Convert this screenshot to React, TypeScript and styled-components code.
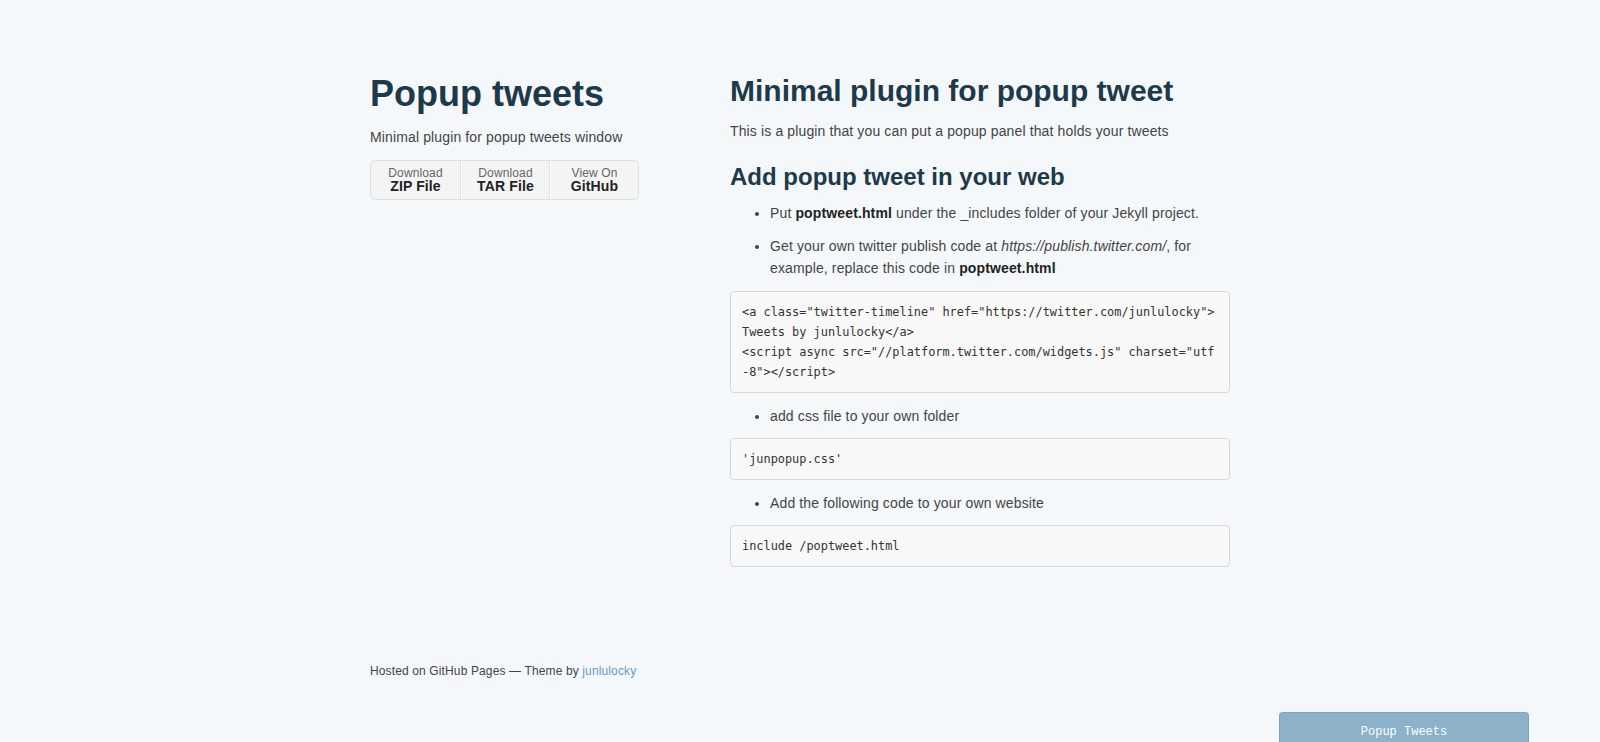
import React from "react";
import styled, { createGlobalStyle } from "styled-components";

const GlobalStyle = createGlobalStyle`
  html, body {
    margin: 0;
    padding: 0;
    background: #f5f8fa;
  }
  body {
    font-family: "Liberation Sans", Arial, Helvetica, sans-serif;
    font-size: 14px;
    line-height: 1.6;
    color: #444;
    letter-spacing: 0.13px;
  }
  * { box-sizing: border-box; }
`;

const Page = styled.div`
  display: flex;
  justify-content: center;
  padding-top: 70px;
`;

const Wrapper = styled.div`
  width: 860px;
  display: flex;
  justify-content: space-between;
  align-items: flex-start;
`;

const Header = styled.header`
  width: 270px;
  height: calc(100vh - 70px - 62px);
  display: flex;
  flex-direction: column;
`;

const Title = styled.h1`
  margin: 4px 0 0;
  font-size: 36px;
  line-height: 40px;
  font-weight: 700;
  letter-spacing: 0;
  color: #1d3a4b;
`;

const Tagline = styled.p`
  margin: 12px 0 12px;
  line-height: 22.4px;
  color: #444;
`;

const Downloads = styled.ul`
  list-style: none;
  margin: 0;
  padding: 0;
  width: 269px;
  height: 40px;
  display: grid;
  grid-template-columns: 90px 89px 1fr;
  background: #f4f4f4;
  border: 1px solid #e0e0e0;
  border-radius: 5px;
`;

const DownloadItem = styled.li`
  height: 38px;
  border-right: 1px solid #e0e0e0;
  & + & {
    border-left: 1px solid #fff;
  }
  &:last-child {
    border-right: none;
  }
`;

const DownloadLink = styled.a`
  display: block;
  text-align: center;
  padding-top: 6px;
  font-size: 12px;
  line-height: 1;
  color: #666;
  text-decoration: none;
`;

const DownloadStrong = styled.strong`
  display: block;
  font-size: 14px;
  line-height: 1;
  color: #222;
  font-weight: 700;
`;

const Footer = styled.p`
  margin: auto 0 0;
  font-size: 12px;
  line-height: 18px;
  color: #444;
`;

const FooterLink = styled.a`
  color: #6a9ac4;
  text-decoration: none;
`;

const Section = styled.main`
  width: 500px;
`;

const PageTitle = styled.h1`
  margin: 3px 0 11px;
  font-size: 30px;
  line-height: 36px;
  font-weight: 700;
  letter-spacing: 0;
  color: #1d3a4b;
`;

const Lead = styled.p`
  margin: 0 0 20px;
  line-height: 22.4px;
`;

const SubTitle = styled.h2`
  margin: 0 0 10px;
  font-size: 24px;
  line-height: 30px;
  font-weight: 700;
  letter-spacing: 0;
  color: #1d3a4b;
`;

const List = styled.ul`
  margin: 0 0 11px;
  padding-left: 40px;
`;

const Item = styled.li`
  line-height: 22.4px;
  & + & {
    margin-top: 10px;
  }
`;

const Bold = styled.strong`
  color: #222;
  font-weight: 700;
`;

const CodeBlock = styled.pre`
  margin: 0 0 12px;
  padding: 10px 11px;
  background: #f8f8f8;
  border: 1px solid #d8d8d8;
  border-radius: 4px;
  font-family: "DejaVu Sans Mono", "Liberation Mono", monospace;
  font-size: 11.9px;
  line-height: 20px;
  letter-spacing: 0;
  color: #333;
  white-space: pre;
  overflow: hidden;
`;

const PopupTab = styled.button`
  position: fixed;
  right: 71px;
  bottom: 0;
  width: 250px;
  height: 30px;
  padding: 8px 0 0;
  border: 1px solid #7fa5be;
  border-bottom: none;
  border-radius: 4px 4px 0 0;
  background: #8cb1c9;
  color: #fff;
  font-family: "Liberation Mono", "Courier New", monospace;
  font-size: 12px;
  line-height: 20px;
  text-align: center;
  cursor: pointer;
`;

const downloads = [
  { top: "Download", bottom: "ZIP File" },
  { top: "Download", bottom: "TAR File" },
  { top: "View On", bottom: "GitHub" },
];

const code1 = `<a class="twitter-timeline" href="https://twitter.com/junlulocky">
Tweets by junlulocky</a>
<script async src="//platform.twitter.com/widgets.js" charset="utf
-8"></script>`;

export default function App() {
  return (
    <>
      <GlobalStyle />
      <Page>
        <Wrapper>
          <Header>
            <Title>Popup tweets</Title>
            <Tagline>Minimal plugin for popup tweets window</Tagline>
            <Downloads>
              {downloads.map((d) => (
                <DownloadItem key={d.bottom}>
                  <DownloadLink href="#">
                    {d.top}
                    <DownloadStrong>{d.bottom}</DownloadStrong>
                  </DownloadLink>
                </DownloadItem>
              ))}
            </Downloads>
            <Footer>
              Hosted on GitHub Pages — Theme by{" "}
              <FooterLink href="#">junlulocky</FooterLink>
            </Footer>
          </Header>
          <Section>
            <PageTitle>Minimal plugin for popup tweet</PageTitle>
            <Lead>This is a plugin that you can put a popup panel that holds your tweets</Lead>
            <SubTitle>Add popup tweet in your web</SubTitle>
            <List>
              <Item>
                Put <Bold>poptweet.html</Bold> under the _includes folder of your Jekyll project.
              </Item>
              <Item>
                Get your own twitter publish code at <em>https://publish.twitter.com/</em>, for
                example, replace this code in <Bold>poptweet.html</Bold>
              </Item>
            </List>
            <CodeBlock>{code1}</CodeBlock>
            <List>
              <Item>add css file to your own folder</Item>
            </List>
            <CodeBlock>'junpopup.css'</CodeBlock>
            <List>
              <Item>Add the following code to your own website</Item>
            </List>
            <CodeBlock>include /poptweet.html</CodeBlock>
          </Section>
        </Wrapper>
      </Page>
      <PopupTab>Popup Tweets</PopupTab>
    </>
  );
}
